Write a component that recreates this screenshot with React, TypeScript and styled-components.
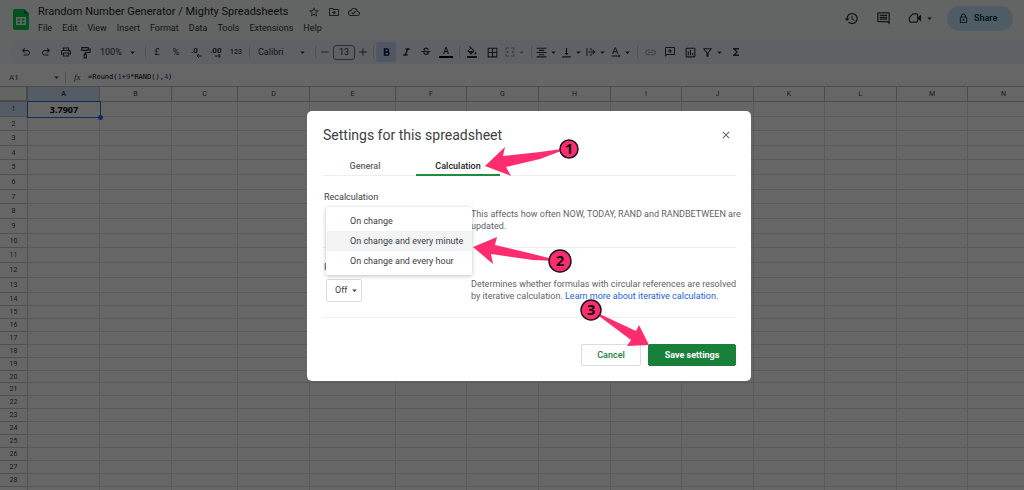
import React from "react";
import styled, { createGlobalStyle, css } from "styled-components";
import {
  MdArrowDropDown,
  MdBorderAll,
  MdClose,
  MdFormatAlignCenter,
  MdFormatBold,
  MdFormatColorFill,
  MdFormatItalic,
  MdFunctions,
  MdHistory,
  MdInsertLink,
  MdOutlineCloudDone,
  MdOutlineDriveFileMove,
  MdOutlineFilterAlt,
  MdOutlineInsertChart,
  MdOutlineInsertComment,
  MdOutlineLock,
  MdOutlinePrint,
  MdStarBorder,
  MdStrikethroughS,
  MdVerticalAlignBottom,
} from "react-icons/md";

const GlobalStyle = createGlobalStyle`
  *, *::before, *::after { box-sizing: border-box; }
  body {
    margin: 0;
    overflow: hidden;
    font-family: Roboto, "Liberation Sans", sans-serif;
    color: #3c4043;
    background: #fff;
  }
  button, input, select {
    font: inherit;
    color: inherit;
    margin: 0;
    padding: 0;
    border: 0;
    background: none;
  }
  h1, h2, h3, p { margin: 0; font-weight: 400; }
  svg { display: block; flex: none; }
`;

/* ---------- Spreadsheet page ---------- */

const Page = styled.div`
  min-height: 100vh;
  overflow: hidden;
`;

const TopArea = styled.div`
  background: #f7fcf9;
`;

const Header = styled.header`
  display: flex;
  align-items: flex-start;
  height: 40px;
  padding: 4px 11px 0 13px;
`;

const Logo = styled.svg`
  margin: 5px 9px 0 0;
`;

const TitleBlock = styled.div`
  flex: 1;
`;

const TitleRow = styled.div`
  display: flex;
  align-items: center;
  height: 16px;
  gap: 8px;
  color: #444746;
`;

const DocTitle = styled.h1`
  font-size: 11px;
  line-height: 16px;
  color: #1f1f1f;
  min-width: 262px;
  white-space: nowrap;
`;

const MenuBar = styled.nav`
  display: flex;
  gap: 10px;
`;

const MenuButton = styled.button`
  font-size: 9px;
  line-height: 16px;
  color: #303336;
`;

const HeaderActions = styled.div`
  display: flex;
  align-items: center;
  gap: 17px;
  height: 28px;
  color: #303336;
`;

const ActionButton = styled.button`
  display: flex;
  align-items: center;
  gap: 2px;
`;

const ShareButton = styled.button`
  display: flex;
  align-items: center;
  gap: 5px;
  width: 66px;
  height: 25px;
  margin-left: -5px;
  padding-left: 11px;
  border-radius: 13px;
  background: #c2e7ff;
  color: #001d35;
  font-size: 9px;
  font-weight: 500;
`;

const Toolbar = styled.div`
  display: flex;
  align-items: center;
  height: 24px;
  margin-left: 10px;
  padding-left: 6px;
  border-radius: 12px 0 0 12px;
  background: #edf2fa;
  color: #303336;
`;

const Tool = styled.button<{ $w?: number; $active?: boolean; $dim?: boolean }>`
  display: flex;
  align-items: center;
  justify-content: center;
  width: ${(p) => p.$w ?? 20}px;
  height: 20px;
  font-size: 9px;
  ${(p) =>
    p.$active &&
    css`
      background: #c6dafc;
      border-radius: 3px;
      color: #041e49;
    `}
  ${(p) =>
    p.$dim &&
    css`
      opacity: 0.45;
    `}
`;

const PickerTool = styled.button<{ $w: number }>`
  display: flex;
  align-items: center;
  justify-content: space-between;
  width: ${(p) => p.$w}px;
  height: 20px;
  padding: 0 4px 0 6px;
  font-size: 9px;
`;

const Divider = styled.span`
  width: 6px;
  height: 12px;
  background: linear-gradient(#c7c7c7, #c7c7c7) center / 1px 100% no-repeat;
`;

const SizeInput = styled.input`
  width: 22px;
  height: 15px;
  margin: 0 1px;
  border: 1px solid #747775;
  border-radius: 3px;
  font-size: 9px;
  text-align: center;
`;

const FormulaBar = styled.div`
  display: flex;
  align-items: center;
  height: 22px;
  padding: 4px 0 0 9px;
  background: #fff;
  color: #444746;
`;

const NameBox = styled.button`
  display: flex;
  align-items: center;
  justify-content: space-between;
  width: 53px;
  font-size: 8px;
`;

const FxMark = styled.span`
  width: 18px;
  padding-left: 4px;
  margin-left: 2px;
  font: italic 9px "Liberation Serif", serif;
`;

const Formula = styled.code`
  font: 7px/10px "DejaVu Sans Mono", "Liberation Mono", monospace;
  color: #000;
`;

const FormulaNumber = styled.span`
  color: #1155cc;
`;

/* ---------- Grid ---------- */

const Sheet = styled.table`
  table-layout: fixed;
  width: 1040px;
  border-collapse: separate;
  border-spacing: 0;
  background: #fff;
`;

const ColHead = styled.th<{ $active?: boolean }>`
  height: 16px;
  padding: 0;
  border: solid #c0c0c0;
  border-width: 1px 1px 1px 0;
  background: ${(p) => (p.$active ? "#d3e3fd" : "#fff")};
  font-size: 7px;
  line-height: 8px;
  font-weight: ${(p) => (p.$active ? 700 : 400)};
`;

const Corner = styled.td`
  padding: 0;
  border: solid #b7b7b7;
  border-width: 1px 2px 2px 0;
  background: #f8f9fa;
`;

const RowHead = styled.th<{ $h: number; $active?: boolean }>`
  height: ${(p) => p.$h}px;
  padding: 0;
  border: solid #c8c8c8;
  border-width: 0 1px 1px 0;
  background: ${(p) => (p.$active ? "#d3e3fd" : "#fff")};
  font-size: 7px;
  line-height: 8px;
  font-weight: 400;
`;

const Cell = styled.td<{ $selected?: boolean }>`
  padding: 0;
  border: solid #e1e1e1;
  border-width: 0 1px 1px 0;
  ${(p) =>
    p.$selected &&
    css`
      position: relative;
      border: 0;
      outline: 1px solid #1a73e8;
      color: #000;
      font: 700 9px/12px "Open Sans", sans-serif;
      text-align: center;
      &::after {
        content: "";
        position: absolute;
        right: -3px;
        bottom: -3px;
        width: 5px;
        height: 5px;
        border-radius: 50%;
        background: #1a73e8;
      }
    `}
`;

/* ---------- Dialog ---------- */

const Backdrop = styled.div`
  position: fixed;
  inset: 0;
  display: flex;
  align-items: center;
  justify-content: center;
  padding: 2px 0 0 34px;
  background: rgba(0, 0, 0, 0.6);
`;

const Dialog = styled.section`
  position: relative;
  width: 444px;
  padding: 14px 15px 15px 16px;
  border-radius: 5px;
  background: #fff;
`;

const DialogHeader = styled.div`
  display: flex;
  align-items: center;
  justify-content: space-between;
  padding-right: 4px;
  margin-bottom: 13px;
`;

const DialogTitle = styled.h2`
  font-size: 14px;
  line-height: 20px;
  color: #3c4043;
`;

const CloseButton = styled.button`
  color: #5f6368;
`;

const Tabs = styled.div`
  display: flex;
  gap: 9px;
  margin-bottom: 2px;
  box-shadow: inset 0 -1px #eceef0;
`;

const Tab = styled.button<{ $active?: boolean }>`
  width: 84px;
  height: 18px;
  font-size: 9px;
  line-height: 16px;
  font-weight: 500;
  color: ${(p) => (p.$active ? "#202124" : "#5f6368")};
  border-bottom: 2px solid ${(p) => (p.$active ? "#1e8e3e" : "transparent")};
`;

const Setting = styled.div`
  position: relative;
  padding: 12px 0 15px;
  border-bottom: 1px solid #eceef0;
`;

const SettingLabel = styled.label`
  display: block;
  padding-left: 1px;
  margin-bottom: 4px;
  font-size: 9px;
  line-height: 14px;
  color: #3c4043;
`;

const SettingRow = styled.div`
  display: grid;
  grid-template-columns: 145px 1fr;
  padding-left: 3px;
  align-items: start;
`;

const Description = styled.p`
  margin-right: -10px;
  font-size: 9px;
  line-height: 12px;
  color: #5f6368;
`;

const HelpLink = styled.a`
  color: #1a64e0;
  text-decoration: none;
`;

const SelectWrap = styled.div`
  position: relative;
  width: 36px;
  svg {
    position: absolute;
    right: 2px;
    top: 7px;
    pointer-events: none;
  }
`;

const Select = styled.select`
  appearance: none;
  width: 100%;
  height: 23px;
  padding-left: 8px;
  border: 1px solid #dadce0;
  border-radius: 2px;
  font-size: 9px;
  color: #3c4043;
`;

const OptionMenu = styled.div`
  position: absolute;
  z-index: 1;
  top: 29px;
  left: 3px;
  width: 146px;
  padding: 4px 0;
  border-radius: 2px;
  background: #fff;
  box-shadow: 0 1px 4px rgba(0, 0, 0, 0.25);
`;

const Option = styled.button<{ $hovered?: boolean }>`
  display: block;
  width: 100%;
  height: 20px;
  padding-left: 24px;
  text-align: left;
  white-space: nowrap;
  font-size: 9px;
  color: #3c4043;
  background: ${(p) => (p.$hovered ? "#f1f3f4" : "transparent")};
`;

const Footer = styled.div`
  display: flex;
  justify-content: flex-end;
  gap: 7px;
  margin-top: 26px;
`;

const FooterButton = styled.button<{ $primary?: boolean }>`
  width: ${(p) => (p.$primary ? 88 : 60)}px;
  height: 22px;
  border: 1px solid ${(p) => (p.$primary ? "#188038" : "#dadce0")};
  border-radius: 2px;
  background: ${(p) => (p.$primary ? "#188038" : "#fff")};
  color: ${(p) => (p.$primary ? "#fff" : "#188038")};
  font-size: 9px;
  font-weight: ${(p) => (p.$primary ? 700 : 500)};
`;

const Callouts = styled.svg`
  position: absolute;
  z-index: 2;
  inset: 0;
  pointer-events: none;
  text {
    font: 700 15px "Open Sans", sans-serif;
    text-anchor: middle;
    fill: #111;
  }
`;

/* ---------- Icons ---------- */

type PathIconProps = { d: string; size?: number; flip?: boolean };

const PathIcon = ({ d, size = 12, flip }: PathIconProps) => (
  <svg width={size} height={size} viewBox="0 0 24 24" fill="currentColor" aria-hidden="true">
    <path d={d} transform={flip ? "translate(24 0) scale(-1 1)" : undefined} />
  </svg>
);

const UNDO =
  "M7 19v-2h7.1q1.575 0 2.738-1T18 13.5T16.838 11T14.1 10H7.8l2.6 2.6L9 14L4 9l5-5l1.4 1.4L7.8 8h6.3q2.425 0 4.163 1.575T20 13.5t-1.737 3.925T14.1 19z";
const ADD_COMMENT =
  "M2 22V4q0-.8.6-1.4T4 2h16q.8 0 1.4.6T22 4v12q0 .8-.6 1.4T20 18H6zM4 17.2L5.200 16H20V4H4zM11 14h2v-3h3V9h-3V6h-2v3H8v2h3z";
const MERGE =
  "M3 3h7v2H5v3H3zM14 3h7v5h-2V5h-5zM3 16h2v3h5v2H3zM19 16h2v5h-7v-2h5zM2 11h4V8.500L9.500 12L6 15.500V13H2zM22 11h-4V8.500L14.500 12l3.500 3.500V13h4z";
const WRAP = "M3 4h2v16H3zM11 4h2v5h-2zM11 15h2v5h-2zM7 11h10.200L14.600 8.400L16 7l5 5l-5 5l-1.400-1.400L17.200 13H7z";
const ROTATE = "M3 19h14v-2.500l4 3.500l-4 3.500V21H3zM9.500 3h2.200L17 15.500h-2.200l-1.200-3H7.600l-1.200 3H4.200zM8.300 10.700h4.600L10.600 5z";

const RollerIcon = () => (
  <svg width="13" height="13" viewBox="0 0 24 24" fill="none" stroke="currentColor" strokeWidth="2" aria-hidden="true">
    <path d="M5 3h12v5H5zM17 5.500h3.500V12H11.500v3" />
    <path d="M9.500 15.500h4V22h-4z" />
  </svg>
);

const MeetIcon = () => (
  <svg width="14" height="14" viewBox="0 0 24 24" aria-hidden="true">
    <path d="M8.500 5H15q1.500 0 1.500 1.500v11q0 1.500-1.500 1.500H4q-1.500 0-1.500-1.500V11z" fill="none" stroke="currentColor" strokeWidth="2" />
    <path d="M17 10.500L22.500 6v12L17 13.500z" fill="currentColor" />
  </svg>
);

const DecimalIcon = ({ digits, right }: { digits: string; right?: boolean }) => (
  <svg width="16" height="14" viewBox="0 0 16 14" aria-hidden="true">
    <text x={right ? 2 : 3} y="8" fontSize="8" fontWeight="700" fill="currentColor">
      {digits}
    </text>
    <path
      d={right ? "M7 11h5M10.500 9l2 2l-2 2" : "M14 11H9M11 9l-2 2l2 2"}
      fill="none"
      stroke="currentColor"
      strokeWidth="1"
    />
  </svg>
);

const TextColorIcon = () => (
  <svg width="14" height="14" viewBox="0 0 14 14" aria-hidden="true">
    <text x="7" y="9" fontSize="9" fontWeight="500" textAnchor="middle" fill="currentColor">
      A
    </text>
    <rect y="11" width="14" height="2" fill="#000" />
  </svg>
);

/* ---------- Data ---------- */

const MENUS = ["File", "Edit", "View", "Insert", "Format", "Data", "Tools", "Extensions", "Help"];

const COLUMNS: [string, number][] = [
  ["A", 72], ["B", 72], ["C", 66], ["D", 72], ["E", 86], ["F", 71], ["G", 72],
  ["H", 72], ["I", 71], ["J", 72], ["K", 71], ["L", 72], ["M", 71], ["N", 72],
];

const ROW_HEIGHTS = [
  15, 14, 15, 14, 15, 15, 14, 15, 15, 14, 15, 15, 15,
  13, 13, 13, 13, 13, 13, 12, 13, 13, 13, 13, 13, 13, 13, 13, 13,
];

const RECALC_OPTIONS = ["On change", "On change and every minute", "On change and every hour"];

const Caret = () => <MdArrowDropDown size={11} />;

const DropTool = ({ label, children }: { label: string; children: React.ReactNode }) => (
  <Tool $w={25} aria-label={label}>
    {children}
    <Caret />
  </Tool>
);

const SmallText = styled.span`
  font-size: 7px;
  font-weight: 500;
`;

const SheetsToolbar = () => (
  <Toolbar role="toolbar">
    <Tool aria-label="Undo"><PathIcon d={UNDO} /></Tool>
    <Tool aria-label="Redo"><PathIcon d={UNDO} flip /></Tool>
    <Tool aria-label="Print"><MdOutlinePrint size={12} /></Tool>
    <Tool $w={18} aria-label="Paint format"><RollerIcon /></Tool>
    <PickerTool $w={48}>100%<Caret /></PickerTool>
    <Divider />
    <Tool $w={18}>£</Tool>
    <Tool>%</Tool>
    <Tool aria-label="Decrease decimal places"><DecimalIcon digits=".0" /></Tool>
    <Tool aria-label="Increase decimal places"><DecimalIcon digits=".00" right /></Tool>
    <Tool>
      <SmallText>123</SmallText>
    </Tool>
    <Divider />
    <PickerTool $w={60}>Calibri<Caret /></PickerTool>
    <Divider />
    <Tool $w={14} aria-label="Decrease font size"><PathIcon size={10} d="M3 11h18v2H3z" /></Tool>
    <SizeInput aria-label="Font size" defaultValue="13" />
    <Tool $w={14} aria-label="Increase font size"><PathIcon size={10} d="M3 11h8V3h2v8h8v2h-8v8h-2v-8H3z" /></Tool>
    <Divider />
    <Tool $active aria-label="Bold"><MdFormatBold size={13} /></Tool>
    <Tool aria-label="Italic"><MdFormatItalic size={13} /></Tool>
    <Tool aria-label="Strikethrough"><MdStrikethroughS size={12} /></Tool>
    <Tool aria-label="Text colour"><TextColorIcon /></Tool>
    <Divider />
    <Tool aria-label="Fill colour"><MdFormatColorFill size={12} /></Tool>
    <Tool aria-label="Borders"><MdBorderAll size={13} /></Tool>
    <Tool $w={26} $dim aria-label="Merge cells">
      <PathIcon d={MERGE} />
      <Caret />
    </Tool>
    <Divider />
    <DropTool label="Horizontal align"><MdFormatAlignCenter size={13} /></DropTool>
    <DropTool label="Vertical align"><MdVerticalAlignBottom size={13} /></DropTool>
    <DropTool label="Text wrapping"><PathIcon d={WRAP} /></DropTool>
    <DropTool label="Text rotation"><PathIcon d={ROTATE} /></DropTool>
    <Divider />
    <Tool $dim aria-label="Insert link"><MdInsertLink size={13} /></Tool>
    <Tool aria-label="Insert comment"><PathIcon d={ADD_COMMENT} /></Tool>
    <Tool aria-label="Insert chart"><MdOutlineInsertChart size={13} /></Tool>
    <Tool $w={26} aria-label="Filter">
      <MdOutlineFilterAlt size={13} />
      <Caret />
    </Tool>
    <Tool aria-label="Functions"><MdFunctions size={12} /></Tool>
  </Toolbar>
);

const Grid = () => (
  <Sheet>
    <colgroup>
      <col width={28} />
      {COLUMNS.map(([name, width]) => (
        <col key={name} width={width} />
      ))}
    </colgroup>
    <thead>
      <tr>
        <Corner />
        {COLUMNS.map(([name]) => (
          <ColHead key={name} scope="col" $active={name === "A"}>
            {name}
          </ColHead>
        ))}
      </tr>
    </thead>
    <tbody>
      {ROW_HEIGHTS.map((height, row) => (
        <tr key={row}>
          <RowHead scope="row" $h={height} $active={row === 0}>
            {row < 28 ? row + 1 : null}
          </RowHead>
          {COLUMNS.map(([name]) => {
            const selected = row === 0 && name === "A";
            return (
              <Cell key={name} $selected={selected}>
                {selected ? "3.7907" : null}
              </Cell>
            );
          })}
        </tr>
      ))}
    </tbody>
  </Sheet>
);

const CALLOUTS = [
  { n: 1, x: 262, y: 38, r: 9, d: "M178 55L198 36L196 45L233 41L262 37L233 48L199 56L204 65Z" },
  { n: 2, x: 253, y: 150, r: 11, d: "M166 136L190 126L188 134L226 143L253 150L226 149L184 143L186 153Z" },
  { n: 3, x: 284, y: 199, r: 10, d: "M342 234L332 214L329 220L284 199L324 229L320 235Z" },
];

const SettingsDialog = () => (
  <Dialog role="dialog" aria-labelledby="settings-title">
    <DialogHeader>
      <DialogTitle id="settings-title">Settings for this spreadsheet</DialogTitle>
      <CloseButton aria-label="Close"><MdClose size={12} /></CloseButton>
    </DialogHeader>
    <Tabs role="tablist">
      <Tab role="tab" aria-selected="false">General</Tab>
      <Tab role="tab" aria-selected="true" $active>Calculation</Tab>
    </Tabs>
    <Setting>
      <SettingLabel as="h3" id="recalc">Recalculation</SettingLabel>
      <OptionMenu role="listbox" aria-labelledby="recalc">
        {RECALC_OPTIONS.map((option, i) => (
          <Option key={option} role="option" aria-selected={i === 1} $hovered={i === 1}>
            {option}
          </Option>
        ))}
      </OptionMenu>
      <SettingRow>
        <span />
        <Description>
          This affects how often NOW, TODAY, RAND and RANDBETWEEN are
          <br />
          updated.
        </Description>
      </SettingRow>
    </Setting>
    <Setting>
      <SettingLabel htmlFor="iterative">Iterative calculation</SettingLabel>
      <SettingRow>
        <SelectWrap>
          <Select id="iterative" defaultValue="Off">
            <option>Off</option>
            <option>On</option>
          </Select>
          <Caret />
        </SelectWrap>
        <Description>
          Determines whether formulas with circular references are resolved
          <br />
          by iterative calculation.{" "}
          <HelpLink href="#iterative">Learn more about iterative calculation.</HelpLink>
        </Description>
      </SettingRow>
    </Setting>
    <Footer>
      <FooterButton>Cancel</FooterButton>
      <FooterButton $primary>Save settings</FooterButton>
    </Footer>
    <Callouts width="444" height="270" viewBox="0 0 444 270" role="img" aria-label="Steps 1 to 3">
      {CALLOUTS.map(({ n, x, y, r, d }) => (
        <g key={n}>
          <path d={d} fill="#ff2d6f" />
          <circle cx={x} cy={y} r={r} fill="#ff2d6f" stroke="#1d1320" strokeWidth="1.500" />
          <text x={x} y={y + 5}>{n}</text>
        </g>
      ))}
    </Callouts>
  </Dialog>
);

export default function App() {
  return (
    <>
      <GlobalStyle />
      <Page>
        <TopArea>
          <Header>
            <Logo width="16" height="21" viewBox="0 0 16 21" aria-hidden="true">
              <path d="M2 0h9l5 5v14q0 2-2 2H2q-2 0-2-2V2q0-2 2-2z" fill="#00d04a" />
              <path d="M11 0l5 5h-5z" fill="#008a3c" />
              <path d="M3 8h10v8H3zM4.500 9.500v2h2.700v-2zM8.800 9.500v2h2.700v-2zM4.500 12.800v1.800h2.700v-1.800zM8.800 12.800v1.800h2.700v-1.800z" fill="#fff" fillRule="evenodd" />
            </Logo>
            <TitleBlock>
              <TitleRow>
                <DocTitle>Rrandom Number Generator / Mighty Spreadsheets</DocTitle>
                <MdStarBorder size={12} />
                <MdOutlineDriveFileMove size={12} />
                <MdOutlineCloudDone size={12} />
              </TitleRow>
              <MenuBar>
                {MENUS.map((menu) => (
                  <MenuButton key={menu}>{menu}</MenuButton>
                ))}
              </MenuBar>
            </TitleBlock>
            <HeaderActions>
              <ActionButton aria-label="Version history"><MdHistory size={15} /></ActionButton>
              <ActionButton aria-label="Comments"><MdOutlineInsertComment size={15} /></ActionButton>
              <ActionButton aria-label="Join a call"><MeetIcon /><Caret /></ActionButton>
              <ShareButton><MdOutlineLock size={11} />Share</ShareButton>
            </HeaderActions>
          </Header>
          <SheetsToolbar />
        </TopArea>
        <FormulaBar>
          <NameBox>A1<Caret /></NameBox>
          <Divider />
          <FxMark>fx</FxMark>
          <Formula>
            =Round(<FormulaNumber>1</FormulaNumber>+<FormulaNumber>9</FormulaNumber>*RAND(),
            <FormulaNumber>4</FormulaNumber>)
          </Formula>
        </FormulaBar>
        <Grid />
      </Page>
      <Backdrop>
        <SettingsDialog />
      </Backdrop>
    </>
  );
}
